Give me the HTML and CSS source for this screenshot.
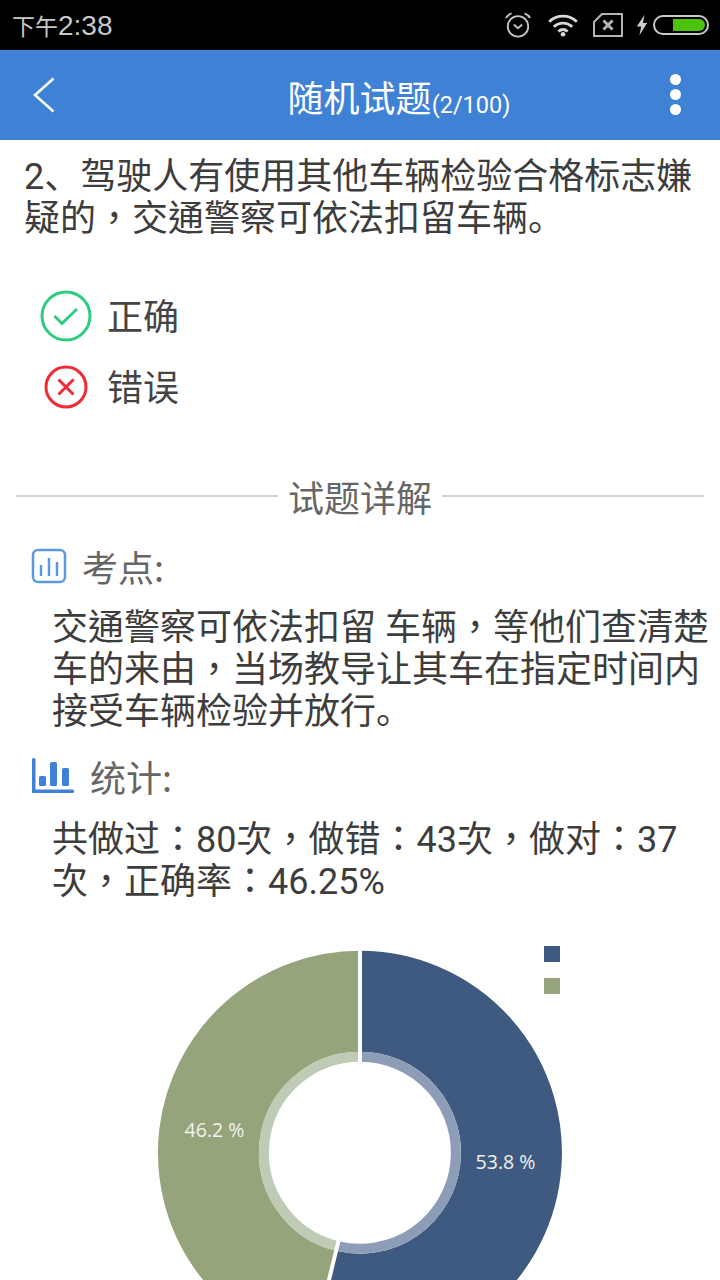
FILE: index.html
```html
<!DOCTYPE html>
<html lang="zh-CN">
<head>
  <meta charset="UTF-8" />
  <meta name="viewport" content="width=device-width, initial-scale=1.0"/>
  <title>随机试题</title>
  <link rel="stylesheet" href="styles.css">
</head>
<body>
  <div class="screen">

    <div class="status-bar">
      <div class="clock"><span class="clock-cn">下午</span>2:38</div>
      <div class="status-icons">
        <svg class="alarm" width="28" height="26" viewBox="0 0 30 28" fill="none" stroke="#c4c4c4">
          <circle cx="15" cy="15.5" r="11" stroke-width="2"/>
          <path d="M10.5 13.5 15 17.5 19.5 13.5" stroke-width="2"/>
          <path d="M2 6.5Q4 3 8 1.5M28 6.5Q26 3 22 1.5" stroke-width="2"/>
        </svg>
        <svg class="wifi" width="32" height="24" viewBox="0 0 34 26" fill="none" stroke="#d8d8d8" stroke-width="3">
          <path d="M2 9.5C10.500 1.500 23.500 1.500 32 9.500"/>
          <path d="M7 15C13 9.500 21 9.500 27 15"/>
          <path d="M12 20C15 17.500 19 17.500 22 20"/>
          <circle cx="17" cy="23" r="2.500" fill="#d8d8d8" stroke="none"/>
        </svg>
        <svg class="sim" width="30" height="24" viewBox="0 0 30 24" fill="none" stroke="#b4b4b4">
          <path d="M9 1H29V23H1V9Z" stroke-width="2"/>
          <path d="M10.500 7.500 19.500 16.500M19.500 7.500 10.500 16.500" stroke-width="3"/>
        </svg>
        <svg class="bolt" width="12" height="22" viewBox="0 0 14 32" fill="#d0d0d0" preserveAspectRatio="none">
          <path d="M10 1 1 18H6L4 31 13 13H8Z"/>
        </svg>
        <div class="battery"><div class="battery-fill"></div></div>
      </div>
    </div>

    <div class="top-bar">
      <svg class="back" width="24" height="36" viewBox="0 0 24 36" fill="none" stroke="#fff" stroke-width="2.500">
        <path d="M21.500 1.500 3 18 21.500 34.500"/>
      </svg>
      <div class="title">随机试题<span class="title-count">(2/100)</span></div>
      <div class="more"><i></i><i></i><i></i></div>
    </div>

    <div class="question" lang="zh-TW">2<span class="low-mark" lang="zh-CN">、</span>驾驶人有使用其他车辆检验合格标志嫌疑的，交通警察可依法扣留车辆<span class="low-mark" lang="zh-CN">。</span></div>

    <div class="options">
      <div class="option">
        <span class="option-icon">
          <svg width="52" height="52" viewBox="0 0 52 52" fill="none" stroke="#2ecc80" stroke-width="3">
            <circle cx="26" cy="26" r="24"/>
            <path d="M14.500 26 22 33.500 37 19"/>
          </svg>
        </span>
        <span class="option-label">正确</span>
      </div>
      <div class="option">
        <span class="option-icon">
          <svg width="44" height="44" viewBox="0 0 44 44" fill="none" stroke="#ef2b35" stroke-width="3">
            <circle cx="22" cy="22" r="20"/>
            <path d="M14.500 14.500 29.500 29.500M29.500 14.500 14.500 29.500"/>
          </svg>
        </span>
        <span class="option-label">错误</span>
      </div>
    </div>

    <div class="divider"><span>试题详解</span></div>

    <div class="section-head">
      <svg width="36" height="36" viewBox="0 0 36 36" fill="none" stroke="#5c9ae0">
        <rect x="2" y="2" width="32" height="32" rx="5" stroke-width="2.500"/>
        <path d="M10 17V28M18 10V28M26 14V28" stroke-width="2.500"/>
      </svg>
      <span>考点:</span>
    </div>
    <div class="body-text" lang="zh-TW">交通警察可依法扣留 车辆，等他们查清楚车的来由，当场教导让其车在指定时间内接受车辆检验并放行<span class="low-mark" lang="zh-CN">。</span></div>

    <div class="section-head section-head-stats">
      <svg width="42" height="36" viewBox="0 0 42 36" fill="#3f82d5">
        <rect x="0" y="0" width="3.500" height="35" rx="1.500"/>
        <rect x="0" y="31.500" width="42" height="3.500" rx="1.500"/>
        <rect x="7" y="18" width="7" height="10" rx="1.500"/>
        <rect x="18" y="4" width="7" height="24" rx="1.500"/>
        <rect x="30" y="10" width="7" height="18" rx="1.500"/>
      </svg>
      <span>统计:</span>
    </div>
    <div class="body-text" lang="zh-TW">共做过：80次，做错：43次，做对：37次，正确率：46.25%</div>

    <svg class="chart" width="720" height="340" viewBox="0 0 720 340" fill="none">
      <rect x="544" y="6" width="16" height="16" fill="#3f5a80"/>
      <rect x="544" y="38" width="16" height="16" fill="#95a47b"/>
      <g transform="translate(360 212.700)">
        <path d="M0 -151.500A151.500 151.500 0 1 1 -35.900 147.200" stroke="#3f5a80" stroke-width="101"/>
        <path d="M-35.900 147.200A151.500 151.500 0 0 1 0 -151.500" stroke="#95a47b" stroke-width="101"/>
        <path d="M0 -96A96 96 0 1 1 -22.700 93.300" stroke="#8e9db7" stroke-width="10"/>
        <path d="M-22.700 93.300A96 96 0 0 1 0 -96" stroke="#c0cbb5" stroke-width="10"/>
        <path d="M0 -90V-204M-21.300 87.400-48.300 198.200" stroke="#fff" stroke-width="4"/>
      </g>
      <text class="chart-label" x="214.500" y="197" text-anchor="middle">46.2 %</text>
      <text class="chart-label" x="505.500" y="229" text-anchor="middle">53.8 %</text>
    </svg>

  </div>
</body>
</html>
```

FILE: styles.css
```css
html, body {
  margin: 0;
  height: 1280px;
  overflow: hidden;
  background: #fff;
}

.screen {
  width: 720px;
  height: 1280px;
  overflow: hidden;
  font-family: "Noto Sans CJK SC", Roboto, sans-serif;
  font-size: 36px;
  line-height: 42px;
  color: #3d3d3d;
}

/* status bar */
.status-bar {
  height: 50px;
  background: #000;
  display: flex;
  justify-content: space-between;
  align-items: center;
  padding: 0 11px 0 12px;
  color: #c8c8c8;
}

.clock {
  font-family: "Liberation Sans", sans-serif;
  font-size: 28px;
  line-height: 50px;
}

.clock-cn {
  font-family: "Noto Sans CJK SC", sans-serif;
  font-size: 23px;
}

.status-icons {
  display: flex;
  align-items: center;
}

.wifi { margin-left: 15px; }
.sim { margin-left: 14px; }
.bolt { margin-left: 13px; }

.battery {
  box-sizing: border-box;
  width: 56px;
  height: 20px;
  margin-left: 5px;
  border: 2px solid #c8c8c8;
  border-radius: 10px;
  padding: 2px;
  display: flex;
  justify-content: flex-end;
}

.battery-fill {
  width: 32px;
  background: #4cc30a;
  border-radius: 0 7px 7px 0;
}

/* top bar */
.top-bar {
  height: 90px;
  background: #3f82d5;
  display: flex;
  align-items: center;
  justify-content: space-between;
  padding: 0 39px 0 32px;
  color: #fff;
}

.title {
  font-size: 36px;
  margin-left: 72px;
  padding-top: 2px;
}

.title-count {
  font-family: Roboto, sans-serif;
  font-size: 23.5px;
  line-height: 0;
  vertical-align: -1px;
}

.more {
  display: flex;
  flex-direction: column;
  gap: 4px;
  margin-bottom: 1px;
}

.more i {
  width: 11px;
  height: 11px;
  border-radius: 50%;
  background: #fff;
}

/* question: TC centres ， and ： as the app's font does, 、 and 。 stay low */
.question {
  padding: 16px 16px 0 24px;
  font-family: Roboto, "Noto Sans CJK TC", sans-serif;
}

.low-mark {
  font-family: Roboto, "Noto Sans CJK SC", sans-serif;
}

.options {
  margin-top: 40px;
}

.option {
  display: flex;
  align-items: center;
  height: 71px;
  color: #444;
}

.option-icon {
  width: 52px;
  margin: 0 15px 0 40px;
  display: flex;
  justify-content: center;
}

.option-label {
  padding-bottom: 4px;
}

/* detail */
.divider {
  display: flex;
  align-items: center;
  gap: 10px;
  margin: 53px 16px 0;
  color: #666;
}

.divider::before,
.divider::after {
  content: "";
  flex: 1;
  height: 2px;
  background: #d4d4d4;
}

.section-head {
  display: flex;
  align-items: center;
  gap: 15px;
  margin: 28px 0 20px 31px;
  color: #666;
}

.section-head-stats {
  gap: 16px;
  margin: 22px 0 22px 32px;
}

.body-text {
  padding: 0 10px 0 52px;
  font-family: Roboto, "Noto Sans CJK TC", sans-serif;
}

.chart {
  display: block;
  margin-top: 37px;
}

.chart-label {
  font-family: "Open Sans", sans-serif;
  font-size: 19.5px;
  fill: #f2f2f2;
}
```
